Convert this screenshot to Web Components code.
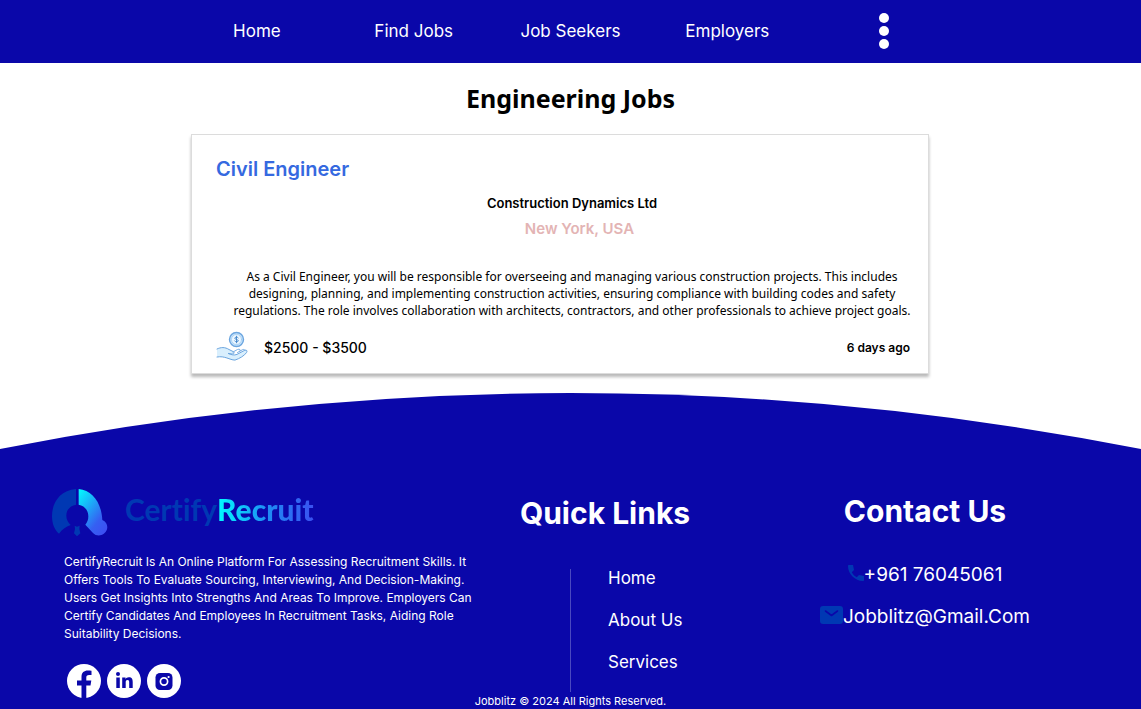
<!DOCTYPE html>
<html lang="en">
<head>
<meta charset="utf-8">
<meta name="viewport" content="width=device-width, initial-scale=1">
<title>Engineering Jobs</title>
<style>
  :root { --brand: #0a07a9; --accent: #0038b3; --ui: Inter, "Liberation Sans", sans-serif; --text: "Noto Sans", "Open Sans", sans-serif; }
  body { margin: 0; font-family: var(--ui); background: #fff; color: #000; }
</style>
</head>
<body>
<job-page>
  <job-card>
    <span slot="title">Civil Engineer</span>
    <span slot="company">Construction Dynamics Ltd</span>
    <span slot="location">New York, USA</span>
    <span slot="description">As a Civil Engineer, you will be responsible for overseeing and managing various construction projects. This includes designing, planning, and implementing construction activities, ensuring compliance with building codes and safety regulations. The role involves collaboration with architects, contractors, and other professionals to achieve project goals.</span>
    <span slot="salary">$2500 - $3500</span>
    <span slot="posted">6 days ago</span>
  </job-card>
</job-page>

<template id="t-page">
  <style>
    :host { display: flex; flex-direction: column; min-height: 100vh; }
    main { padding: 0 21px 0 0; }
    h1 { margin: 0 -21px 0 0; padding: 18px 0; font: bold 25px/35px var(--text); text-align: center; }
    site-footer { margin-top: 19px; flex: 1; }
  </style>
  <site-nav></site-nav>
  <main><h1>Engineering Jobs</h1><slot></slot></main>
  <site-footer></site-footer>
</template>

<template id="t-nav">
  <style>
    :host { display: block; background: var(--brand); }
    nav { display: grid; grid-template-columns: repeat(5, 1fr); align-items: center; justify-items: center; max-width: 784px; margin: 0 auto; height: 62px; padding-bottom: 1px; }
    a { color: #fff; text-decoration: none; font-size: 17px; line-height: 24px; white-space: nowrap; }
    button { border: 0; padding: 0; background: none; display: flex; cursor: pointer; }
  </style>
  <nav aria-label="Main">
    <a href="#home">Home</a><a href="#jobs">Find Jobs</a><a href="#seekers">Job Seekers</a><a href="#employers">Employers</a>
    <button type="button" aria-label="More"><svg width="12" height="36" viewBox="0 0 12 36" fill="#fff"><circle cx="6" cy="5" r="5"/><circle cx="6" cy="18" r="5"/><circle cx="6" cy="31" r="5"/></svg></button>
  </nav>
</template>

<template id="t-card">
  <style>
    :host { display: block; box-sizing: border-box; max-width: 738px; margin: 0 auto; padding: 20px 14px 10px 24px; border: 1px solid #dcdcdc; box-shadow: 0 3px 3px rgba(0,0,0,.28); background: #fff; }
    h2, p { margin: 0; }
    h2 { font-size: 20px; line-height: 28px; font-weight: 600; color: #3569e0; }
    .company { margin-top: 8px; padding-left: 14px; text-align: center; font-size: 13px; line-height: 24px; font-weight: 600; }
    .location { padding-left: 29px; text-align: center; font-size: 15px; line-height: 28px; font-weight: 600; color: #e3b4b4; }
    .description { margin-top: 25px; padding-left: 14px; text-align: center; font: 12px/17px var(--text); }
    .meta { display: flex; align-items: center; margin: 12px 4px 0 0; height: 32px; }
    .salary { margin-left: 16px; font-size: 14px; font-weight: 500; }
    .posted { margin-left: auto; font-size: 12px; font-weight: 600; }
  </style>
  <h2><slot name="title"></slot></h2>
  <p class="company"><slot name="company"></slot></p>
  <p class="location"><slot name="location"></slot></p>
  <p class="description"><slot name="description"></slot></p>
  <div class="meta">
    <svg width="32" height="32" viewBox="0 0 32 32" fill="none" stroke="#6ba5df" stroke-linejoin="round" stroke-linecap="round" aria-hidden="true">
      <circle cx="20.500" cy="8.500" r="7" fill="#c5e2fa" stroke-width="1.400"/>
      <circle cx="20.500" cy="8.500" r="5" fill="#eff8ff" stroke="#9ac8f0" stroke-width=".7"/>
      <path d="M22.300 6.800c-.5-1-3.500-1-3.500.4 0 1.700 3.500.9 3.500 2.600 0 1.400-3 1.400-3.700.2M20.500 5.200v6.600" stroke="#3e83c9" stroke-width=".9"/>
      <path d="M1 18c4-2 8-2 12 .5l4 2c2 1.200 1 2.600-1 2.500l-4-.6c3 1.200 6 2.300 9 1l7.500-4c2-1 3.200.5 2 2.200-2 3-7 6-11.500 7.500C13.500 29 9 24.500 1 26z" fill="#d9effd" stroke="none"/>
      <path d="M1 18c4-2 8-2 12 .5l4 2c2 1.200 1 2.600-1 2.500l-4-.6c3 1.200 6 2.300 9 1l7.500-4c2-1 3.200.5 2 2.200-2 3-7 6-11.500 7.500C13.500 29 9 24.500 1 26" stroke-width="1"/>
      <path d="M17 21l4.500-2.500c2-.8 3.500.2 2.500 1.500M21.500 21.500l5-2.800c1.600-.6 2.700 0 2.500.8" stroke-width=".9"/>
    </svg>
    <span class="salary"><slot name="salary"></slot></span>
    <span class="posted"><slot name="posted"></slot></span>
  </div>
</template>

<template id="t-footer">
  <style>
    :host { display: flex; flex-direction: column; color: #fff; }
    .cap { display: block; width: 100%; height: 56px; fill: var(--brand); }
    footer { flex: 1; background: var(--brand); }
    .columns { display: grid; grid-template-columns: 480fr 250fr 390fr 21fr; }
    .about { padding: 39px 0 0 52px; }
    .about p { margin: 15px 0 0 12px; font-size: 12px; line-height: 18px; max-width: 416px; }
    .social { display: flex; gap: 6px; margin: 21px 0 0 15px; }
    .social a { display: block; height: 34px; }
    h2 { margin: 0; font-size: 30px; line-height: 40px; font-weight: 700; text-align: center; white-space: nowrap; }
    .links { padding-top: 44px; }
    ul { list-style: none; margin: 0; padding: 0; }
    .links ul { display: flow-root; margin: 36px 0 0 90px; border-left: 1px solid #4a49c0; padding-left: 37px; height: 123px; box-sizing: border-box; }
    li { font-size: 17px; line-height: 24px; padding-bottom: 18px; }
    .links li:first-child { margin-top: -3px; }
    a { color: inherit; text-decoration: none; }
    .contact { padding-top: 42px; }
    .contact ul { margin-top: 32px; }
    .contact li { display: flex; justify-content: center; font-size: 19px; }
    .contact a { display: flex; align-items: center; }
    .contact svg { margin-bottom: 4px; }
    small { display: block; margin-top: -5px; text-align: center; font-size: 11px; line-height: 16px; }
  </style>
  <svg class="cap" viewBox="0 0 100 56" preserveAspectRatio="none" aria-hidden="true"><path d="M0 56Q50-56 100 56z"/></svg>
  <footer>
    <div class="columns">
      <section class="about">
        <brand-logo></brand-logo>
        <p>CertifyRecruit Is An Online Platform For Assessing Recruitment Skills. It Offers Tools To Evaluate Sourcing, Interviewing, And Decision-Making. Users Get Insights Into Strengths And Areas To Improve. Employers Can Certify Candidates And Employees In Recruitment Tasks, Aiding Role Suitability Decisions.</p>
        <div class="social">
          <a href="#facebook" aria-label="Facebook"><svg width="34" height="34" viewBox="0 0 34 34"><circle cx="17" cy="17" r="17" fill="#fff"/><path d="M14.500 34V21.500H10v-5h4.500v-3.600c0-4.300 2.500-6.400 6.400-6.400 1.600 0 3 .2 3.600.3v4.200h-2.400c-2.200 0-2.800 1-2.800 2.600v2.900h5l-.8 5h-4.200V34z" fill="var(--brand)"/></svg></a>
          <a href="#linkedin" aria-label="LinkedIn"><svg width="34" height="34" viewBox="0 0 34 34"><circle cx="17" cy="17" r="17" fill="#fff"/><g fill="var(--brand)"><circle cx="11" cy="10" r="2"/><path d="M9.300 13.500h3.500V24H9.300zM15.200 13.500h3.300v1.500c.6-1 1.700-1.800 3.300-1.800 3.200 0 3.900 2 3.900 4.800v6h-3.500v-5.400c0-1.300-.1-2.500-1.700-2.500s-1.800 1.200-1.800 2.500V24h-3.500z"/></g></svg></a>
          <a href="#instagram" aria-label="Instagram"><svg width="34" height="34" viewBox="0 0 34 34"><circle cx="17" cy="17" r="17" fill="#fff"/><rect x="8.500" y="9" width="17" height="17" rx="4.500" fill="var(--brand)"/><circle cx="17" cy="17.500" r="3.600" fill="none" stroke="#fff" stroke-width="1.700"/><circle cx="21.600" cy="13" r="1.100" fill="#fff"/></svg></a>
        </div>
      </section>
      <nav class="links" aria-label="Quick Links">
        <h2>Quick Links</h2>
        <ul><li><a href="#home">Home</a></li><li><a href="#about">About Us</a></li><li><a href="#services">Services</a></li></ul>
      </nav>
      <section class="contact">
        <h2>Contact Us</h2>
        <ul>
          <li><a href="tel:+96176045061"><svg width="16" height="16" viewBox="0 0 16 16" fill="var(--accent)" aria-hidden="true"><path d="M1 0h4l1 5-2.200 2.200c1.200 2.200 2.800 3.800 5 5L11 10l5 1v4c0 .6-.4 1-1 1C7 16 0 9 0 1c0-.6.4-1 1-1z"/></svg>+961 76045061</a></li>
          <li><a href="mailto:jobblitz@gmail.com"><svg width="23" height="18" viewBox="0 0 23 18" aria-hidden="true"><rect width="23" height="18" rx="3" fill="var(--accent)"/><path d="M5.500 5l6 4.500 6-4.500" fill="none" stroke="var(--brand)" stroke-width="1.600" stroke-linecap="round" stroke-linejoin="round"/></svg>Jobblitz@Gmail.Com</a></li>
        </ul>
      </section>
    </div>
    <small>Jobblitz © 2024 All Rights Reserved.</small>
  </footer>
</template>

<template id="t-logo">
  <style>
    :host { display: flex; align-items: flex-start; height: 50px; }
    svg { margin-top: 1px; }
    .name { margin-left: 16px; font: bold 30px/42px Lato, sans-serif; font-variant-ligatures: none; color: var(--accent); white-space: nowrap; }
    b { background: linear-gradient(90deg, #0ff 0%, #1d8ff5 50%, #3a50f0 100%); background-clip: text; -webkit-background-clip: text; color: transparent; font-weight: 900; }
  </style>
  <svg width="57" height="48" viewBox="36 41 171 144" aria-hidden="true">
    <defs><linearGradient id="g" x1="0" y1="0" x2=".8" y2="1"><stop offset="0" stop-color="#0ff"/><stop offset=".75" stop-color="#3560f2"/><stop offset="1" stop-color="#3c50f2"/></linearGradient></defs>
    <path d="M108 41C60 45 36 82 36 122c0 24 8 42 21 53 9-12 20-21 35-26-8-8-13-17-13-28 0-18 12-30 29-33z" fill="#0038b3"/>
    <path d="M116 41c42 4 68 41 71 93 12 5 17 16 14 28-5 18-29 25-42 11l-23-25c6-7 9-15 9-25 0-19-12-32-29-35z" fill="url(#g)"/>
    <path d="M104 151l7 3 8-3-1 10 3 13-10 9-9-9 3-13z" fill="#0038b3"/>
  </svg>
  <span class="name">Certify<b>Recruit</b></span>
</template>

<script>
  const define = (name, templateId) => customElements.define(name, class extends HTMLElement {
    constructor() {
      super();
      this.attachShadow({ mode: "open" }).append(document.getElementById(templateId).content.cloneNode(true));
    }
  });
  define("brand-logo", "t-logo");
  define("site-nav", "t-nav");
  define("job-card", "t-card");
  define("site-footer", "t-footer");
  define("job-page", "t-page");
</script>
</body>
</html>
